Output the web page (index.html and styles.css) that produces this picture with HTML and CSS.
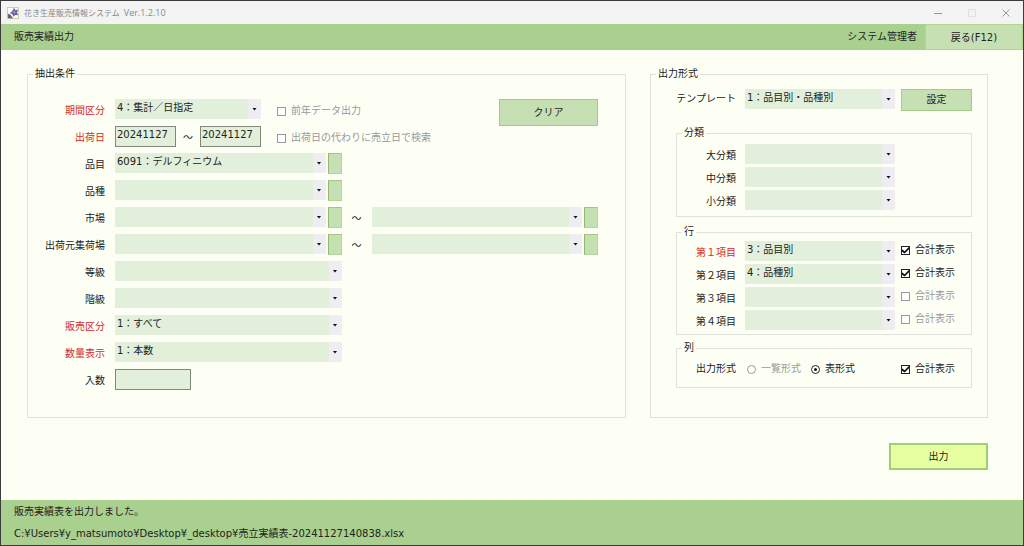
FILE: index.html
```html
<!DOCTYPE html>
<html lang="ja">
<head>
<meta charset="utf-8">
<title>花き生産販売情報システム</title>
<link rel="stylesheet" href="styles.css">
</head>
<body>
<div class="window">
  <header class="titlebar">
    <svg class="app-icon" viewBox="0 0 12 12" aria-hidden="true">
      <rect x=".5" y=".5" width="11" height="11" fill="#fafbf5" stroke="#c5d5a8"/>
      <path d="M7 .8l1.300 2.300L11.200 2.800 10 5.400 11.200 8.200 8.300 7.900 6.300 9.800 5.500 7.200 2.800 5.900 5.200 4.200z" fill="#7660ae"/>
      <circle cx="7.300" cy="5.200" r="1" fill="#b7a5dc"/>
      <path d="M.8 6.500l2.700 1.300L6 11.300H1z" fill="#66636f"/>
    </svg>
    <span class="app-name">花き生産販売情報システム</span>
    <span class="app-version">Ver.1.2.10</span>
    <div class="window-buttons">
      <button type="button" aria-label="最小化"><svg viewBox="0 0 10 10"><path d="M1 5.500h8" stroke="#999"/></svg></button>
      <button type="button" aria-label="最大化" disabled><svg viewBox="0 0 10 10"><path d="M1.500 1.500h7v7h-7z" fill="none" stroke="#e0e0e0"/></svg></button>
      <button type="button" aria-label="閉じる"><svg viewBox="0 0 10 10"><path d="M1.500 1.500l7 7m0-7l-7 7" stroke="#999"/></svg></button>
    </div>
  </header>
  <div class="page-head">
    <h1>販売実績出力</h1>
    <span class="user">システム管理者</span>
    <button type="button" class="back">戻る(F12)</button>
  </div>

  <main>
    <form>
      <div class="panels">
        <fieldset class="conditions">
          <legend>抽出条件</legend>
          <div class="condition-grid">
            <label class="name required" for="period">期間区分</label>
            <div class="line">
              <div class="combo short"><select id="period"><option>4：集計／日指定</option></select></div>
              <label class="check"><input type="checkbox" disabled><span>前年データ出力</span></label>
              <button type="button" class="btn clear">クリア</button>
            </div>

            <label class="name required" for="date-from">出荷日</label>
            <div class="line">
              <div class="dates">
                <input class="text" id="date-from" value="20241127">
                <span class="tilde">～</span>
                <input class="text" aria-label="出荷日（終了）" value="20241127">
              </div>
              <label class="check"><input type="checkbox" disabled><span>出荷日の代わりに売立日で検索</span></label>
            </div>

            <label class="name" for="item">品目</label>
            <div class="combo pick"><select id="item"><option>6091：デルフィニウム</option></select></div>
            <button type="button" class="lookup" aria-label="品目を検索"></button>

            <label class="name" for="variety">品種</label>
            <div class="combo pick"><select id="variety"><option></option></select></div>
            <button type="button" class="lookup" aria-label="品種を検索"></button>

            <label class="name" for="market">市場</label>
            <div class="combo pick"><select id="market"><option></option></select></div>
            <button type="button" class="lookup" aria-label="市場を検索"></button>
            <span class="tilde">～</span>
            <div class="combo pick"><select aria-label="市場（終了）"><option></option></select></div>
            <button type="button" class="lookup" aria-label="市場（終了）を検索"></button>

            <label class="name" for="depot">出荷元集荷場</label>
            <div class="combo pick"><select id="depot"><option></option></select></div>
            <button type="button" class="lookup" aria-label="集荷場を検索"></button>
            <span class="tilde">～</span>
            <div class="combo pick"><select aria-label="出荷元集荷場（終了）"><option></option></select></div>
            <button type="button" class="lookup" aria-label="集荷場（終了）を検索"></button>

            <label class="name" for="grade">等級</label>
            <div class="combo wide"><select id="grade"><option></option></select></div>

            <label class="name" for="class">階級</label>
            <div class="combo wide"><select id="class"><option></option></select></div>

            <label class="name required" for="sales">販売区分</label>
            <div class="combo wide"><select id="sales"><option>1：すべて</option></select></div>

            <label class="name required" for="quantity">数量表示</label>
            <div class="combo wide"><select id="quantity"><option>1：本数</option></select></div>

            <label class="name" for="pack">入数</label>
            <div class="line"><input class="text pack" id="pack"></div>
          </div>
        </fieldset>

        <fieldset class="format">
          <legend>出力形式</legend>
          <div class="format-grid template">
            <label class="name" for="template">テンプレート</label>
            <div class="combo"><select id="template"><option>1：品目別・品種別</option></select></div>
            <button type="button" class="btn setting">設定</button>
          </div>

          <fieldset class="group categories">
            <legend>分類</legend>
            <div class="format-grid">
              <label class="name" for="cat1">大分類</label>
              <div class="combo"><select id="cat1"><option></option></select></div>
              <label class="name" for="cat2">中分類</label>
              <div class="combo"><select id="cat2"><option></option></select></div>
              <label class="name" for="cat3">小分類</label>
              <div class="combo"><select id="cat3"><option></option></select></div>
            </div>
          </fieldset>

          <fieldset class="group rows">
            <legend>行</legend>
            <div class="format-grid">
              <label class="name required" for="row1">第１項目</label>
              <div class="combo"><select id="row1"><option>3：品目別</option></select></div>
              <label class="check"><input type="checkbox" checked><span>合計表示</span></label>
              <label class="name" for="row2">第２項目</label>
              <div class="combo"><select id="row2"><option>4：品種別</option></select></div>
              <label class="check"><input type="checkbox" checked><span>合計表示</span></label>
              <label class="name" for="row3">第３項目</label>
              <div class="combo"><select id="row3"><option></option></select></div>
              <label class="check"><input type="checkbox" disabled><span>合計表示</span></label>
              <label class="name" for="row4">第４項目</label>
              <div class="combo"><select id="row4"><option></option></select></div>
              <label class="check"><input type="checkbox" disabled><span>合計表示</span></label>
            </div>
          </fieldset>

          <fieldset class="group columns">
            <legend>列</legend>
            <div class="format-grid">
              <span class="name" id="layout-name">出力形式</span>
              <div class="radios" role="radiogroup" aria-labelledby="layout-name">
                <label class="check"><input type="radio" name="layout" disabled><span>一覧形式</span></label>
                <label class="check"><input type="radio" name="layout" checked><span>表形式</span></label>
              </div>
              <label class="check"><input type="checkbox" checked><span>合計表示</span></label>
            </div>
          </fieldset>
        </fieldset>
      </div>
      <div class="actions"><button type="button" class="btn output">出力</button></div>
    </form>
  </main>

  <footer>
    <p>販売実績表を出力しました。</p>
    <p>C:¥Users¥y_matsumoto¥Desktop¥_desktop¥売立実績表-20241127140838.xlsx</p>
  </footer>
</div>
</body>
</html>
```
FILE: styles.css
```css
* { box-sizing: border-box; }

body {
  margin: 0;
  color: #222;
  font: 10px/20px "DejaVu Sans", "Noto Sans CJK JP", sans-serif;
}

button, input, select {
  margin: 0;
  padding: 0;
  border: 0;
  border-radius: 0;
  color: inherit;
  font: inherit;
}

.window {
  display: flex;
  flex-direction: column;
  min-height: 100vh;
  border: 1px solid #3c3c3c;
  background: #fdfff5;
}

.titlebar {
  display: flex;
  align-items: center;
  height: 23px;
  padding-left: 6px;
  background: #f3f3f3;
  color: #8a8a8a;
  font-family: "Open Sans", "Noto Sans CJK JP", sans-serif;
}
.app-icon { width: 12px; height: 12px; margin-right: 5px; }
.app-name { font-size: 8px; }
.app-version { margin-left: 4px; font-size: 9px; }
.window-buttons { display: flex; margin-left: auto; }
.window-buttons button {
  display: grid;
  place-items: center;
  width: 34px;
  height: 22px;
  background: none;
}
.window-buttons svg { width: 10px; height: 10px; }

.page-head {
  display: flex;
  height: 26px;
  padding-left: 13px;
  background: #a9d08e;
  line-height: 26px;
}
.page-head h1 { margin: 0 auto 0 0; font-size: 10px; font-weight: 400; }
.user { margin-right: 8px; }
.back {
  width: 98px;
  padding-bottom: 2px;
  border: 1px solid #b0d696;
  background: #c6e0b4;
}

main { flex: 1; padding: 16px 35px 30px 26px; }

.panels {
  display: grid;
  grid-template-columns: minmax(0, 599fr) minmax(0, 338fr);
  gap: 24px;
}

fieldset {
  min-width: 0;
  margin: 0;
  padding: 0;
  border: 1px solid #dfe1dc;
}
legend { margin-left: 5px; padding: 0 2px; line-height: 16px; }

.conditions { padding: 17px 27px 28px 0; }
.format { padding: 7px 15px 28px 25px; }
.format > legend { margin-left: -20px; }

.condition-grid {
  display: grid;
  grid-template-columns: 87px minmax(0, 1fr) 14px 30px minmax(0, 1fr) 14px;
  grid-auto-rows: 20px;
  row-gap: 7px;
}
.name {
  grid-column: 1;
  padding: 2px 10px 0 0;
  text-align: right;
  white-space: nowrap;
}
.required { color: #d42a2a; }
.line { display: flex; grid-column: 2 / -1; align-items: flex-start; }

.combo {
  display: grid;
  grid-template-columns: minmax(0, 1fr) 13px;
  height: 20px;
  background: #e2efda;
}
.combo::before {
  grid-area: 1 / 2;
  background: #eeeef2;
  content: "";
}
.combo::after {
  grid-area: 1 / 2;
  z-index: 1;
  place-self: center;
  width: 5px;
  height: 3px;
  background: #111;
  clip-path: polygon(0 0, 100% 0, 50% 100%);
  content: "";
  pointer-events: none;
}
.combo select {
  grid-area: 1 / 1 / 2 / 3;
  z-index: 1;
  padding: 0 13px 2px 2px;
  background: none;
  line-height: 16px;
  appearance: none;
}
.short { width: 146px; }
.pick { margin-right: 2px; }
.wide { grid-column: 2 / 4; }

.dates { display: flex; justify-content: space-between; width: 146px; }
.text {
  width: 61px;
  height: 21px;
  padding: 0 0 5px 1px;
  border: 1px solid #7f8a7a;
  background: #e2efda;
}
.pack { width: 76px; }
.tilde { padding-top: 2px; text-align: center; }

.lookup {
  height: 21px;
  border: 1px solid #b3d49b;
  border-top-color: #a0c884;
  border-left-color: #8fba70;
  background: #c6e0b4;
}

.check { display: flex; align-items: center; gap: 5px; height: 20px; white-space: nowrap; }
.line .check { margin: 2px 0 0 16px; }
.check input {
  display: grid;
  flex: none;
  place-items: center;
  width: 9px;
  height: 9px;
  border: 1px solid #222;
  background: #fff;
  appearance: none;
}
.check input:disabled { border-color: #999; }
.check input:disabled + span { color: #999; }
.check input:checked::before {
  width: 7px;
  height: 7px;
  background: #111;
  clip-path: polygon(0 40%, 38% 68%, 100% 5%, 100% 40%, 38% 100%, 0 75%);
  content: "";
}
.check input[type="radio"] { border-radius: 50%; }
.check input[type="radio"]:checked::before {
  width: 3px;
  height: 3px;
  border-radius: 50%;
  clip-path: none;
}

.btn { border: 1px solid #a3cd86; background: #c6e0b4; }
.clear { width: 99px; height: 27px; margin-left: auto; }

.format-grid {
  display: grid;
  grid-template-columns: 68px minmax(0, 1fr) 76px;
  grid-auto-rows: 20px;
  row-gap: 3px;
}
.format-grid .combo { grid-column: 2; }
.format-grid > .check { padding: 0 0 2px 6px; }
.format-grid .name { padding-right: 9px; }
.template { grid-template-columns: 69px minmax(0, 1fr) 77px; grid-auto-rows: 22px; }
.template .name { padding-top: 0; }
.setting { margin-left: 6px; }

.categories { margin-top: 14px; padding: 3px 0 6px; }
.rows { margin-top: 7px; padding: 1px 0 4px; }
.columns { margin-top: 5px; padding: 3px 0 8px; }
.columns .name { padding-top: 0; }
.columns .check { padding-bottom: 0; }
.radios { display: flex; gap: 10px; padding-left: 2px; }

.actions { display: flex; justify-content: flex-end; margin-top: 25px; }
.output {
  width: 99px;
  height: 27px;
  border: 2px solid #a3cd74;
  background: #e6ffa0;
}

footer { padding: 1px 13px 0; background: #a9d08e; line-height: 22px; }
footer p { margin: 0; }
```
